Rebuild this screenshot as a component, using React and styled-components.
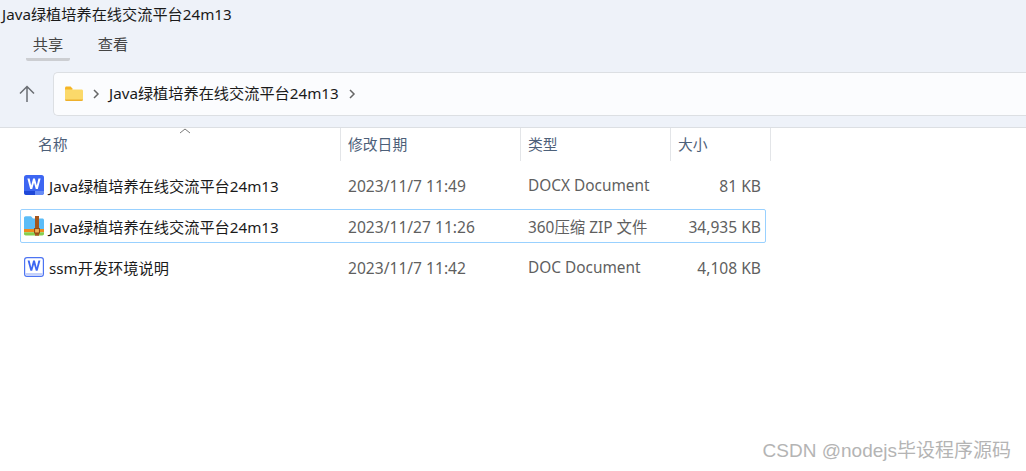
import React from "react";
import styled, { createGlobalStyle } from "styled-components";

const Global = createGlobalStyle`
  html, body { margin: 0; padding: 0; background: #fff; }
  body { font-family: "Noto Sans", "Noto Sans CJK SC", sans-serif; }
`;
const Page = styled.div`
  position: relative;
  width: 1026px;
  height: 471px;
  overflow: hidden;
  background: #fff;
  font-size: 15.2px;
  color: #1a1a1a;
`;
const Top = styled.header`
  height: 128px;
  box-sizing: border-box;
  background: #eef2f9;
  border-bottom: 1px solid #dcdfe3;
  display: flex;
  flex-direction: column;
`;
const Title = styled.div`
  height: 28px;
  padding-left: 2px;
  line-height: 28px;
  white-space: nowrap;
`;
const Tabs = styled.nav`
  display: flex;
  height: 44px;
  padding-left: 26px;
  gap: 21px;
`;
const Tab = styled.div`
  width: 44px;
  height: 30px;
  line-height: 33px;
  text-align: center;
  color: #444;
  white-space: nowrap;
  border-bottom: ${(p) => (p.$active ? "3px solid #ccced2" : "3px solid transparent")};
  border-radius: 0 0 2px 2px;
`;
const PathRow = styled.div`
  display: flex;
  align-items: flex-start;
`;
const UpBtn = styled.div`
  width: 53px;
  height: 44px;
  display: flex;
  align-items: center;
  justify-content: center;
  box-sizing: border-box;
`;
const AddressBar = styled.div`
  flex: 1;
  height: 44px;
  box-sizing: border-box;
  display: flex;
  align-items: center;
  background: #fbfcfe;
  border: 1px solid #dcdfe3;
  border-right: none;
  border-radius: 5px 0 0 5px;
  padding-left: 11px;
`;
const Crumb = styled.span`
  white-space: nowrap;
  margin: -4px 9px 0 9px;
`;
const Gap = styled.span`
  width: 9px;
`;
const HeaderRow = styled.div`
  display: grid;
  grid-template-columns: 320px 180px 150px 100px;
  margin-left: 21px;
  height: 33px;
  width: 750px;
  position: relative;
`;
const HeaderCell = styled.div`
  box-sizing: border-box;
  padding-left: ${(p) => p.$pad || 7}px;
  line-height: 33px;
  color: #4d6079;
  border-right: 1px solid #e3e5e8;
  white-space: nowrap;
  font-size: 14.8px;
`;
const SortMark = styled.svg`
  position: absolute;
  left: 158px;
  top: 0;
`;
const List = styled.div`
  margin: 7px 0 0 20px;
  width: 746px;
  display: flex;
  flex-direction: column;
  gap: 7px;
`;
const Row = styled.div`
  display: grid;
  grid-template-columns: 321px 180px 150px 95px;
  align-items: center;
  height: 34px;
  box-sizing: border-box;
  border: 1px solid ${(p) => (p.$selected ? "#99d1ff" : "transparent")};
  border-radius: 2px;
  white-space: nowrap;
`;
const NameCell = styled.div`
  display: flex;
  align-items: center;
  gap: 5px;
  padding-left: 3px;
`;
const DateCell = styled.div`
  padding: 1px 0 0 6px;
  color: #5f5f5f;
  font-size: 15.6px;
`;
const TypeCell = styled.div`
  padding: 1px 0 0 6px;
  color: #5f5f5f;
  font-size: 15.4px;
`;
const SizeCell = styled.div`
  text-align: right;
  padding: 1px 6px 0 0;
  color: #5f5f5f;
  font-size: 15.6px;
`;
const Watermark = styled.div`
  position: absolute;
  right: 15px;
  bottom: 8px;
  font-family: "Liberation Sans", "Noto Sans CJK SC", sans-serif;
  font-size: 19px;
  line-height: 24px;
  color: #b4b4b4;
  white-space: nowrap;
`;

const UpArrow = () => (
  <svg width="18" height="20" viewBox="0 0 18 20" fill="none" stroke="#6a6e73" strokeWidth="1.5">
    <path d="M9 18V3M2 9.5L9 2.5L16 9.5" />
  </svg>
);
const Chevron = () => (
  <svg width="8" height="10" viewBox="0 0 8 10" fill="none" stroke="#666" strokeWidth="1.5">
    <path d="M2 1L6 5L2 9" />
  </svg>
);
const FolderIcon = () => (
  <svg width="18" height="16" viewBox="0 0 18 16">
    <path d="M0 2.2C0 1.2.6.6 1.5.6H5.6L7.4 2.4V5H0Z" fill="#f5b525" />
    <path d="M0 3.6H16.6C17.4 3.6 18 4.2 18 5V13.6C18 14.4 17.4 15 16.6 15H1.4C.6 15 0 14.4 0 13.6Z" fill="#fbd96a" />
    <path d="M0 13.4H18V13.6C18 14.4 17.4 15 16.6 15H1.4C.6 15 0 14.4 0 13.6Z" fill="#eeb02c" />
  </svg>
);
const DocxIcon = () => (
  <svg width="20" height="20" viewBox="0 0 20 20">
    <rect width="20" height="20" rx="2.5" fill="#3d66f2" />
    <path d="M0 16H20V17.5C20 18.9 18.9 20 17.5 20H2.5C1.1 20 0 18.9 0 17.5Z" fill="#678cf6" />
    <path d="M0 16H11V20H2.5C1.1 20 0 18.9 0 17.5Z" fill="#1f48d8" />
    <path d="M3.4 3.6L6.2 14H8.2L10 7.8L11.8 14H13.8L16.6 3.6H14.4L12.8 10.6L10.9 3.6H9.1L7.2 10.6L5.6 3.6Z" fill="#fff" />
  </svg>
);
const ZipIcon = () => (
  <svg width="20" height="20" viewBox="0 0 20 20">
    <path d="M0 2C0 1 .7.3 1.7.3H7L9 2.4H18.3C19.3 2.4 20 3.1 20 4.1V13H0Z" fill="#5bbcf7" />
    <rect y="13" width="20" height="3.2" fill="#f08a1d" />
    <path d="M0 16.2H20V17.8C20 18.8 19.3 19.5 18.3 19.5H1.7C.7 19.5 0 18.8 0 17.8Z" fill="#86cf4e" />
    <rect x="11" y="0" width="4" height="19.7" fill="#a4561d" />
    <rect x="10.6" y="12.6" width="4.8" height="4.4" fill="#f3b35a" stroke="#8a4514" strokeWidth="1" />
  </svg>
);
const DocIcon = () => (
  <svg width="20" height="20" viewBox="0 0 20 20">
    <rect x=".6" y=".6" width="18.8" height="18.8" rx="2.4" fill="#fff" stroke="#4d74f2" strokeWidth="1.2" />
    <path d="M1.2 16H18.8V17C18.8 18.1 18 18.8 17 18.8H3C2 18.8 1.2 18.1 1.2 17Z" fill="#c5d1fa" />
    <path d="M3.6 3.6L6.4 13.8H8.2L10 7.4L11.8 13.8H13.6L16.4 3.6H14.4L12.7 10.6L10.9 3.6H9.1L7.3 10.6L5.6 3.6Z" fill="#3d66f2" />
  </svg>
);

const files = [
  { icon: <DocxIcon />, name: "Java绿植培养在线交流平台24m13", date: "2023/11/7 11:49", type: "DOCX Document", size: "81 KB" },
  { icon: <ZipIcon />, name: "Java绿植培养在线交流平台24m13", date: "2023/11/27 11:26", type: "360压缩 ZIP 文件", size: "34,935 KB", selected: true },
  { icon: <DocIcon />, name: "ssm开发环境说明", date: "2023/11/7 11:42", type: "DOC Document", size: "4,108 KB" },
];

export default function App() {
  return (
    <Page>
      <Global />
      <Top>
        <Title>Java绿植培养在线交流平台24m13</Title>
        <Tabs>
          <Tab $active>共享</Tab>
          <Tab>查看</Tab>
        </Tabs>
        <PathRow>
          <UpBtn><UpArrow /></UpBtn>
          <AddressBar>
            <FolderIcon />
            <Gap />
            <Chevron />
            <Crumb>Java绿植培养在线交流平台24m13</Crumb>
            <Chevron />
          </AddressBar>
        </PathRow>
      </Top>
      <HeaderRow>
        <SortMark width="12" height="6" viewBox="0 0 12 6" fill="none" stroke="#7a7a7a" strokeWidth="1">
          <path d="M1 5L6 1L11 5" />
        </SortMark>
        <HeaderCell $pad={17}>名称</HeaderCell>
        <HeaderCell>修改日期</HeaderCell>
        <HeaderCell>类型</HeaderCell>
        <HeaderCell>大小</HeaderCell>
      </HeaderRow>
      <List>
        {files.map((f) => (
          <Row key={f.date} $selected={f.selected}>
            <NameCell>{f.icon}<span>{f.name}</span></NameCell>
            <DateCell>{f.date}</DateCell>
            <TypeCell>{f.type}</TypeCell>
            <SizeCell>{f.size}</SizeCell>
          </Row>
        ))}
      </List>
      <Watermark>CSDN @nodejs毕设程序源码</Watermark>
    </Page>
  );
}
